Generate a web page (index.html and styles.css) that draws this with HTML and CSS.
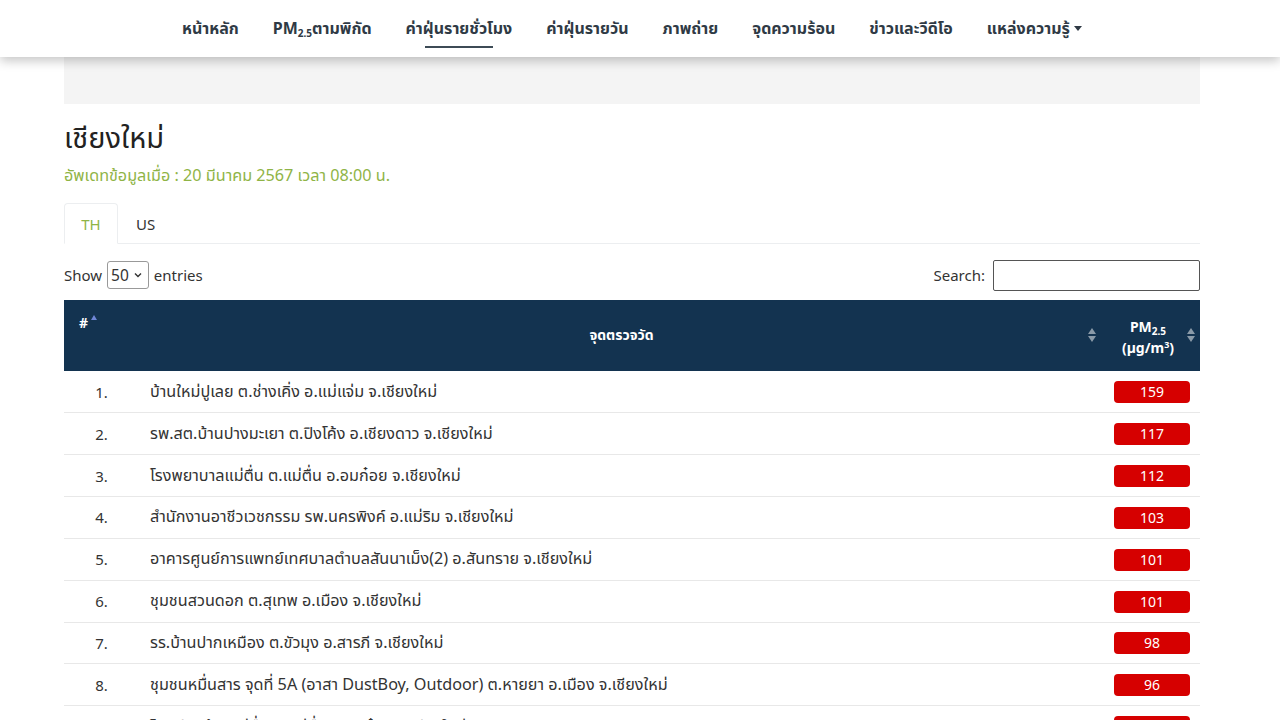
FILE: index.html
```html
<!DOCTYPE html>
<html lang="th">
<head>
<meta charset="utf-8">
<title>เชียงใหม่</title>
<link rel="stylesheet" href="styles.css">
</head>
<body>
<header class="topnav">
  <nav class="menu">
    <a class="item">หน้าหลัก</a>
    <a class="item">PM<sub>2.5</sub>ตามพิกัด</a>
    <a class="item active">ค่าฝุ่นรายชั่วโมง</a>
    <a class="item">ค่าฝุ่นรายวัน</a>
    <a class="item">ภาพถ่าย</a>
    <a class="item">จุดความร้อน</a>
    <a class="item">ข่าวและวีดีโอ</a>
    <a class="item">แหล่งความรู้ <span class="caret"></span></a>
  </nav>
</header>
<main class="container">
  <div class="banner"></div>
  <h1 class="title">เชียงใหม่</h1>
  <p class="updated">อัพเดทข้อมูลเมื่อ : 20 มีนาคม 2567 เวลา 08:00 น.</p>
  <div class="tabs">
    <span class="tab active">TH</span>
    <span class="tab">US</span>
  </div>
  <div class="controls">
    <label class="length">Show <span class="select">50 <svg width="8" height="6" viewBox="0 0 8 6"><path d="M1 1.5 L4 4.5 L7 1.5" fill="none" stroke="#333" stroke-width="1.4"/></svg></span> entries</label>
    <label class="search">Search: <span class="input"></span></label>
  </div>
  <table class="data">
    <thead>
      <tr>
        <th class="c-num"><span class="hash">#</span><span class="asc"></span></th>
        <th class="c-name"><span>จุดตรวจวัด</span><span class="both"></span></th>
        <th class="c-val"><span class="pm">PM<sub>2.5</sub><br>(µg/m<sup>3</sup>)</span><span class="both"></span></th>
      </tr>
    </thead>
    <tbody>
      <tr><td class="c-num">1.</td><td>บ้านใหม่ปูเลย ต.ช่างเคิ่ง อ.แม่แจ่ม จ.เชียงใหม่</td><td class="c-val"><span class="badge">159</span></td></tr>
      <tr><td class="c-num">2.</td><td>รพ.สต.บ้านปางมะเยา ต.ปิงโค้ง อ.เชียงดาว จ.เชียงใหม่</td><td class="c-val"><span class="badge">117</span></td></tr>
      <tr><td class="c-num">3.</td><td>โรงพยาบาลแม่ตื่น ต.แม่ตื่น อ.อมก๋อย จ.เชียงใหม่</td><td class="c-val"><span class="badge">112</span></td></tr>
      <tr><td class="c-num">4.</td><td>สำนักงานอาชีวเวชกรรม รพ.นครพิงค์ อ.แม่ริม จ.เชียงใหม่</td><td class="c-val"><span class="badge">103</span></td></tr>
      <tr><td class="c-num">5.</td><td>อาคารศูนย์การแพทย์เทศบาลตำบลสันนาเม็ง(2) อ.สันทราย จ.เชียงใหม่</td><td class="c-val"><span class="badge">101</span></td></tr>
      <tr><td class="c-num">6.</td><td>ชุมชนสวนดอก ต.สุเทพ อ.เมือง จ.เชียงใหม่</td><td class="c-val"><span class="badge">101</span></td></tr>
      <tr><td class="c-num">7.</td><td>รร.บ้านปากเหมือง ต.ขัวมุง อ.สารภี จ.เชียงใหม่</td><td class="c-val"><span class="badge">98</span></td></tr>
      <tr><td class="c-num">8.</td><td>ชุมชนหมื่นสาร จุดที่ 5A (อาสา DustBoy, Outdoor) ต.หายยา อ.เมือง จ.เชียงใหม่</td><td class="c-val"><span class="badge">96</span></td></tr>
      <tr><td class="c-num">9.</td><td>โรงเรียนบ้านแม่ตื่น ต.แม่ตื่น อ.อมก๋อย จ.เชียงใหม่</td><td class="c-val"><span class="badge">95</span></td></tr>
    </tbody>
  </table>
</main>
</body>
</html>
```

FILE: styles.css
```css
* { box-sizing: border-box; }
html, body { margin: 0; padding: 0; }
body {
  font-family: "Noto Sans", "Noto Sans Thai", "DejaVu Sans", sans-serif;
  color: #333;
  background: #fff;
  font-size: 15px;
  overflow: hidden;
}
.topnav {
  height: 57px;
  background: #fff;
  box-shadow: 0 4px 10px rgba(0,0,0,0.22);
  position: relative;
  z-index: 2;
}
.menu {
  display: flex;
  justify-content: center;
  gap: 34px;
  height: 57px;
  align-items: center;
  padding-right: 16px;
}
.item {
  font-size: 16px;
  font-weight: 700;
  color: #2f3a45;
  position: relative;
  line-height: 20px;
  white-space: nowrap;
  margin-top: -2px;
}
.item sub { font-size: 10px; line-height: 0; vertical-align: -3px; }
.item.active::after {
  content: "";
  position: absolute;
  left: 19px; right: 19px;
  bottom: -10px;
  height: 2px;
  background: #3d4b56;
}
.caret {
  display: inline-block;
  width: 0; height: 0;
  border-left: 4px solid transparent;
  border-right: 4px solid transparent;
  border-top: 5px solid #2f3a45;
  vertical-align: 3px;
}
.container {
  width: 1136px;
  margin: 0 auto 0 64px;
}
.banner {
  height: 47px;
  background: #f4f4f4;
}
.title {
  font-size: 29px;
  font-weight: 400;
  color: #222;
  margin: 14px 0 0;
  line-height: 38px;
}
.updated {
  color: #8fb446;
  font-size: 16.2px;
  margin: 8px 0 0;
  line-height: 22px;
}
.tabs {
  display: flex;
  margin-top: 17px;
  border-bottom: 1px solid #eceef0;
  height: 41px;
}
.tab {
  display: flex;
  align-items: center;
  justify-content: center;
  padding: 0 17px;
  font-size: 15px;
  color: #333;
  height: 41px;
}
.tab.active {
  color: #8fb446;
  border: 1px solid #eceef0;
  border-bottom: 1px solid #fff;
  border-radius: 4px 4px 0 0;
  margin-bottom: -1px;
  height: 41px;
  width: 54px;
  padding: 0;
}
.tab + .tab { padding-left: 18px; }
.controls {
  display: flex;
  justify-content: space-between;
  align-items: center;
  margin-top: 15px;
  height: 32px;
}
.length, .search { display: flex; align-items: center; gap: 4px; font-size: 15px; color: #333; }
.length { gap: 5px; }
.select {
  display: inline-flex;
  align-items: center;
  gap: 5px;
  border: 1px solid #999;
  border-radius: 3px;
  height: 28px;
  padding: 0 6px 0 3px;
  font-size: 15.5px;
}
.input {
  display: inline-block;
  width: 207px;
  height: 31px;
  border: 1px solid #555;
  border-radius: 2px;
  margin-left: 4px;
}
.data {
  width: 100%;
  border-collapse: collapse;
  margin-top: 9px;
}
.data thead tr { background: #133350; height: 71px; }
.data th {
  color: #fff;
  font-weight: 700;
  font-size: 14px;
  position: relative;
  vertical-align: middle;
}
.data th.c-num { width: 85px; text-align: left; padding: 0 0 26px 15px; }
.data th.c-num .asc {
  display: inline-block;
  width: 0; height: 0;
  border-left: 3px solid transparent;
  border-right: 3px solid transparent;
  border-bottom: 5px solid #6f86d6;
  vertical-align: 8px;
  margin-left: 3px;
}
.data th.c-name { text-align: center; padding-right: 7px; }
.data th .both {
  position: absolute;
  top: 28px;
  width: 8px;
  height: 14px;
}
.data th.c-name .both { right: 4px; }
.data th.c-val .both { right: 5px; }
.data th .both::before, .data th .both::after {
  content: "";
  position: absolute;
  left: 0;
  border-left: 4px solid transparent;
  border-right: 4px solid transparent;
}
.data th .both::before { top: 0; border-bottom: 6px solid #8a9aa8; }
.data th .both::after { bottom: 0; border-top: 6px solid #8a9aa8; }
.data th.c-val { width: 100px; text-align: center; padding: 0 4px 0 0; }
.data th.c-val .pm { line-height: 21px; display: inline-block; padding-top: 2px; }
.data th sub { font-size: 10px; line-height: 0; vertical-align: -3px; }
.data th sup { font-size: 9px; line-height: 0; vertical-align: 5px; }
.data td {
  height: 41.85px;
  border-bottom: 1px solid #e8e8e8;
  font-size: 16.2px;
  color: #333;
  white-space: nowrap;
}
.data td.c-num { text-align: center; padding-right: 11px; font-size: 15px; }
.data td.c-val { text-align: right; padding-right: 10px; }
.badge {
  display: inline-block;
  width: 76px;
  height: 22px;
  line-height: 22px;
  background: #d60000;
  color: #fff;
  border-radius: 4px;
  font-size: 14px;
  text-align: center;
}
```
